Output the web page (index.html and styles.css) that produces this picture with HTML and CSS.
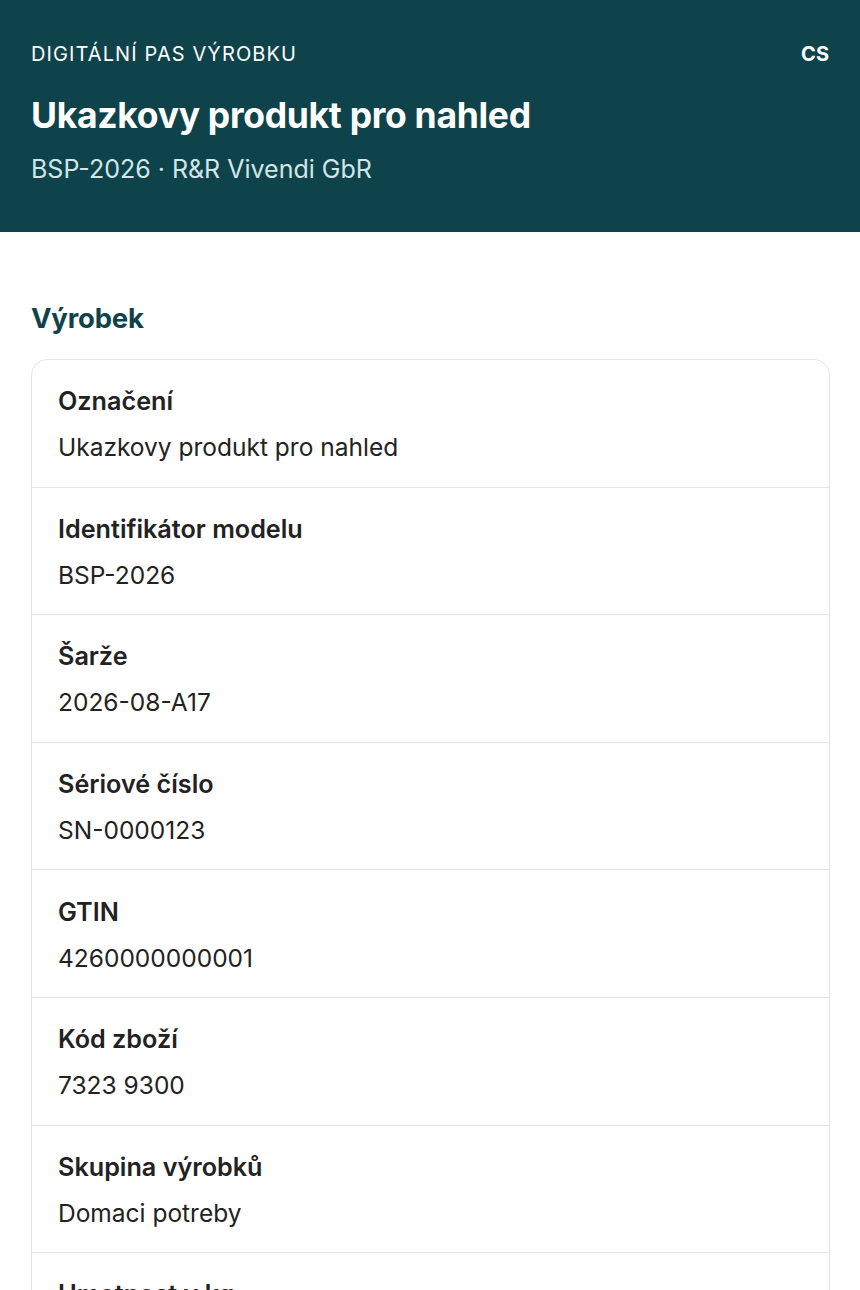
FILE: index.html
```html
<!DOCTYPE html>
<html lang="cs">
<head>
<meta charset="utf-8">
<title>Digitální pas výrobku</title>
<link rel="stylesheet" href="styles.css">
</head>
<body>
<header class="hero">
  <div class="hero-top">
    <span class="eyebrow">DIGITÁLNÍ PAS VÝROBKU</span>
    <span class="lang">CS</span>
  </div>
  <h1 class="title">Ukazkovy produkt pro nahled</h1>
  <p class="subtitle">BSP-2026 · R&amp;R Vivendi GbR</p>
</header>
<main class="content">
  <h2 class="section-title">Výrobek</h2>
  <div class="card">
    <div class="row"><div class="label">Označení</div><div class="value">Ukazkovy produkt pro nahled</div></div>
    <div class="row"><div class="label">Identifikátor modelu</div><div class="value">BSP-2026</div></div>
    <div class="row"><div class="label">Šarže</div><div class="value">2026-08-A17</div></div>
    <div class="row"><div class="label">Sériové číslo</div><div class="value">SN-0000123</div></div>
    <div class="row"><div class="label">GTIN</div><div class="value">4260000000001</div></div>
    <div class="row"><div class="label">Kód zboží</div><div class="value">7323 9300</div></div>
    <div class="row"><div class="label">Skupina výrobků</div><div class="value">Domaci potreby</div></div>
    <div class="row"><div class="label">Hmotnost v kg</div><div class="value">0,85</div></div>
  </div>
</main>
</body>
</html>
```
FILE: styles.css
```css
* { box-sizing: border-box; }
html, body { margin: 0; padding: 0; }
body {
  font-family: Inter, "Noto Sans", "Liberation Sans", sans-serif;
  background: #ffffff;
  color: #222222;
}
.hero {
  background: #0e434b;
  color: #ffffff;
  height: 232px;
  padding: 40px 31px 0 31px;
}
.hero-top {
  display: flex;
  justify-content: space-between;
  align-items: center;
  height: 28px;
}
.eyebrow {
  font-size: 20px;
  letter-spacing: 1.1px;
  font-weight: 400;
}
.lang {
  font-size: 20px;
  font-weight: 700;
}
.title {
  margin: 27px 0 0 0;
  font-size: 35.5px;
  line-height: 42px;
  font-weight: 700;
  letter-spacing: -0.3px;
}
.subtitle {
  margin: 17px 0 0 0;
  font-size: 25px;
  line-height: 30px;
  color: #d3e6e7;
}
.content {
  padding: 69px 31px 40px 31px;
}
.section-title {
  margin: 0 0 24px 0;
  font-size: 27.5px;
  line-height: 34px;
  font-weight: 700;
  color: #0e434b;
  letter-spacing: -0.2px;
}
.card {
  border: 1px solid #e3e6e8;
  border-radius: 16px;
  margin-right: -1px;
}
.row {
  padding: 26.3px 26px 24.3px 26px;
  border-bottom: 1px solid #e3e6e8;
  display: flex;
  flex-direction: column;
  gap: 16px;
}
.row:last-child { border-bottom: none; }
.label {
  font-size: 25.2px;
  line-height: 30px;
  font-weight: 600;
  color: #222222;
}
.value {
  font-size: 24.5px;
  line-height: 30px;
  font-weight: 400;
  color: #222222;
}
```
